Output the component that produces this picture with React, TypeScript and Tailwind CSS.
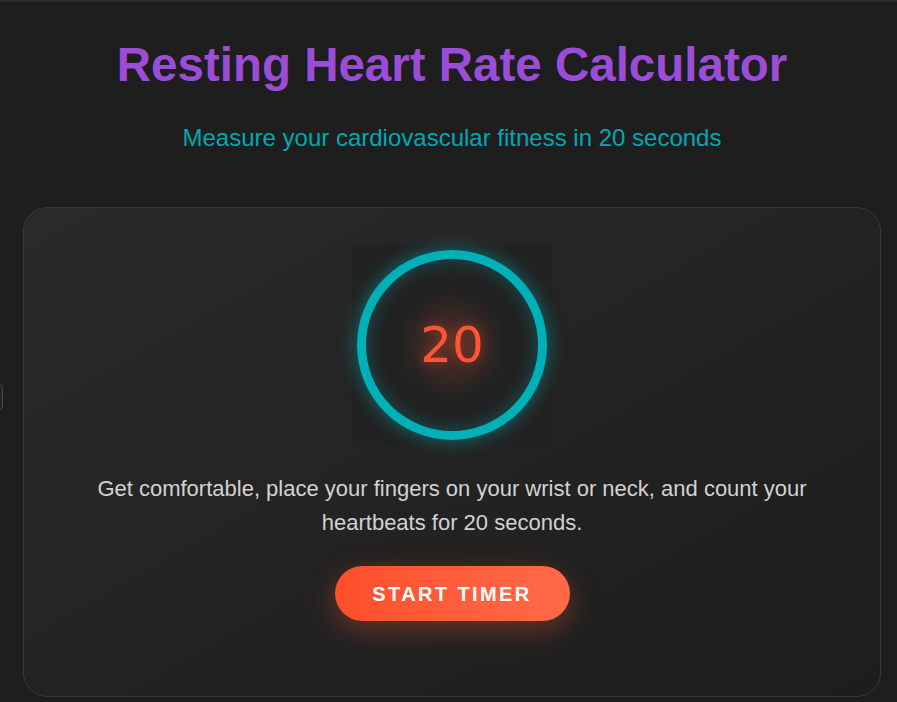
import React from 'react';

const App = () => {
  return (
    <div className="relative min-h-[702px] overflow-hidden bg-[#1e1e1e] font-['Liberation_Sans',Arial,sans-serif]">
      <div className="h-[2px] bg-[#2c2c2c]" />
      <div className="absolute left-[-26px] top-[383px] h-[28px] w-[29px] rounded-md border border-[#4a4a4a] bg-[#242424]" />

      <div className="pl-[23px] pr-[16px]">
        <h1 className="pt-[34px] text-center text-[47.5px] font-bold leading-[58px] text-[#9b4dd8]">
          Resting Heart Rate Calculator
        </h1>
        <p className="mt-[29px] text-center text-[24px] leading-[30px] text-[#00a9b2]">
          Measure your cardiovascular fitness in 20 seconds
        </p>

        <div className="mt-[54px] flex h-[490px] flex-col items-center rounded-[24px] border border-[#383838] bg-gradient-to-br from-[#2a2a2a] to-[#1d1d1d] pt-[37px]">
          <div className="flex h-[200px] w-[200px] items-center justify-center bg-[#222222]">
            <div className="flex h-[190px] w-[190px] items-center justify-center rounded-full border-[9px] border-[#00b0b8] bg-[radial-gradient(circle,rgba(255,87,51,0.22)_0%,rgba(34,34,34,0)_45%)] shadow-[0_0_18px_rgba(0,176,184,0.55),inset_0_0_18px_rgba(0,176,184,0.35)]">
              <span className="font-['Comic_Sans_MS','DejaVu_Sans',sans-serif] text-[50px] leading-none text-[#ff5533] [text-shadow:0_0_12px_rgba(255,85,51,0.5)]">
                20
              </span>
            </div>
          </div>

          <p className="mt-[27px] max-w-[760px] text-center text-[22px] leading-[34px] text-[#d2d2d2]">
            Get comfortable, place your fingers on your wrist or neck, and count your heartbeats for 20 seconds.
          </p>

          <button className="mt-[26px] h-[55px] w-[235px] rounded-full bg-gradient-to-r from-[#ff4e2b] to-[#ff6a48] text-[20px] font-bold tracking-[2.4px] text-white shadow-[0_8px_28px_rgba(255,87,51,0.35)]">
            START TIMER
          </button>
        </div>
      </div>
    </div>
  );
};

export default App;
